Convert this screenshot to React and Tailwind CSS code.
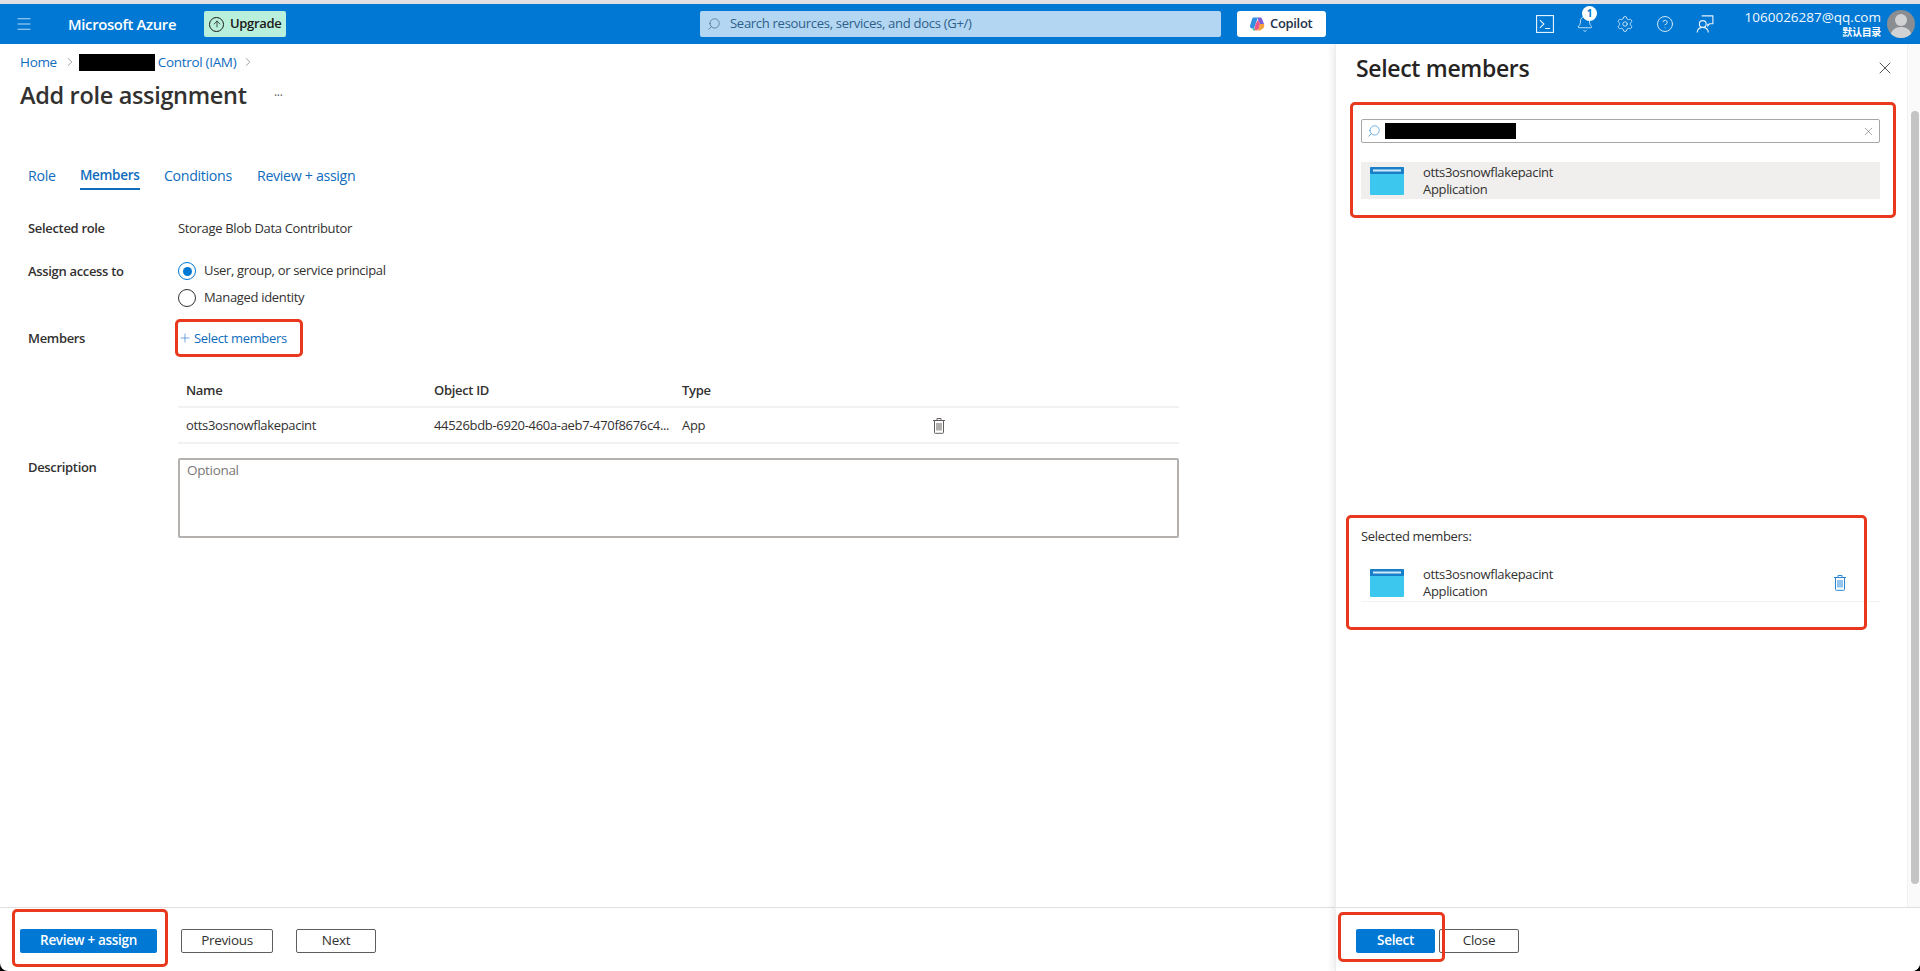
import React from "react";
import { Bell, Settings, CircleHelp, X, Plus, ChevronRight, ArrowUp, Search, Menu } from "lucide-react";

const Trash = ({ color = "#605e5c" }) => (
  <svg width="14" height="17" viewBox="0 0 14 17" fill="none" stroke={color} strokeWidth="1">
    <path d="M1 3.5h12M5 3.5V1.5h4v2M2.5 3.5v12a.8.8 0 0 0 .8.8h7.4a.8.8 0 0 0 .8-.8v-12" />
    <path d="M5 6v7.5M7 6v7.5M9 6v7.5" />
  </svg>
);

const AppIcon = () => (
  <svg width="34" height="28" viewBox="0 0 34 28" className="shrink-0">
    <rect x="0" y="0" width="34" height="28" rx="1" fill="#3cc8ee" />
    <rect x="0" y="0" width="34" height="7" rx="1" fill="#1a7fc9" />
    <rect x="3" y="2.5" width="28" height="2" fill="#cfeafa" />
  </svg>
);

const Annot = ({ className }) => (
  <div className={"absolute border-[3px] border-[#e8391f] rounded-[5px] pointer-events-none " + className} />
);

const Label = ({ children }) => (
  <div className="w-[150px] shrink-0 font-semibold text-[#323130]">{children}</div>
);

export default function App() {
  return (
    <div className="h-[971px] w-[1920px] bg-black overflow-hidden">
      <div
        className="relative h-full w-full overflow-hidden rounded-b-[8px] flex flex-col bg-white text-[13px] tracking-[-0.025em] text-[#323130]"
        style={{ fontFamily: '"Open Sans","Noto Sans CJK SC",sans-serif' }}
      >
        <div className="h-1 bg-[#e1dfe1] shrink-0" />
        <header className="h-10 shrink-0 bg-[#0078d4] flex items-center text-white">
          <Menu className="ml-[15px] w-[18px] h-[18px]" strokeWidth={1.2} color="#cfe6f8" />
          <div className="ml-[35px] w-[136px] text-[14.8px] font-semibold">Microsoft Azure</div>
          <div className="h-[26px] w-[82px] rounded-[2px] bg-[#b9f0dc] text-[#1b1a19] flex items-center gap-[6px] pl-[5px] text-[13px] font-semibold">
            <span className="w-[15px] h-[15px] rounded-full border border-[#1b1a19] flex items-center justify-center">
              <ArrowUp className="w-[10px] h-[10px]" strokeWidth={1.8} />
            </span>
            Upgrade
          </div>
          <div className="ml-[414px] h-[26px] w-[521px] rounded-[2px] bg-[#b3d6f2] flex items-center text-[#2d5f8a] text-[13.1px]">
            <Search className="ml-[7px] w-[14px] h-[14px] -scale-x-100" strokeWidth={1.2} color="#44688a" />
            <span className="ml-[9px]">Search resources, services, and docs (G+/)</span>
          </div>
          <div className="ml-4 h-[26px] w-[89px] rounded-[3px] bg-white text-[#24324a] flex items-center gap-[5px] pl-[12px] text-[13px] font-semibold">
            <svg width="16" height="16" viewBox="0 0 16 16">
              <path d="M5 1.5h4L6.5 8 5 12.5H3.2C1.5 12.5.6 11 1.1 9.5L3 3.2C3.3 2.2 4 1.5 5 1.5z" fill="#2f8fe0" />
              <path d="M9 1.5h2.2c1 0 1.7.7 2 1.700L15 8 11 8 9 4z" fill="#7a5fd6" />
              <path d="M6.500 8 9 4l2 4-1.500 5.500-4.500 1z" fill="#e8578a" />
              <path d="M11 8h4c.8 1.800 0 4.500-2 5-1 1-2 1.500-3 1.500H6l3.500-1z" fill="#f5a13a" />
              <path d="M3.200 12.500H5.500L6 14.500c-1.300.2-2.300-.7-2.800-2z" fill="#3cc07a" />
            </svg>
            Copilot
          </div>
          <div className="ml-[210px] flex items-center gap-[22px]">
            <svg width="18" height="18" viewBox="0 0 16 16" fill="none" stroke="#e6f2fb" strokeWidth="1">
              <rect x="0.500" y="0.500" width="15" height="15" />
              <path d="M3.500 4.500 7 8l-3.500 3.500M8 12h4.500" />
            </svg>
            <div className="relative">
              <Bell className="w-[18px] h-[18px]" strokeWidth={1.1} color="#e6f2fb" />
              <span className="absolute -top-[9px] left-[6px] w-[15px] h-[15px] rounded-full bg-white text-[#0078d4] text-[10px] font-bold flex items-center justify-center">1</span>
            </div>
            <Settings className="w-[18px] h-[18px]" strokeWidth={1.1} color="#e6f2fb" />
            <CircleHelp className="w-[18px] h-[18px]" strokeWidth={1.2} color="#e6f2fb" />
            <svg width="18" height="18" viewBox="0 0 16 16" fill="none" stroke="#e6f2fb" strokeWidth="1">
              <circle cx="6" cy="8" r="3" />
              <path d="M1 15.500c.3-2.800 2.200-4.500 5-4.500s4.700 1.700 5 4.500M5 .800h10v7h-3l-1.500 1.700V7.800" />
            </svg>
          </div>
          <div className="ml-auto flex flex-col items-end leading-none mr-[6px] -mt-[1px]">
            <span className="text-[13.5px] text-[#f3f9fd] tracking-normal leading-[17px]">1060026287@qq.com</span>
            <span className="text-[10px] font-bold leading-[13px]">默认目录</span>
          </div>
          <div className="w-[28px] h-[28px] mr-[5px] rounded-full bg-[#8a8d91] overflow-hidden relative shrink-0 flex flex-col items-center">
            <span className="mt-[4px] w-[12px] h-[12px] rounded-full bg-[#d0d2d4]" />
            <span className="mt-[1px] w-[22px] h-[12px] rounded-t-[10px] bg-[#d0d2d4]" />
          </div>
        </header>

        <div className="flex-1 flex min-h-0">
          <main className="flex-1 flex flex-col min-w-0">
            <div className="flex-1 pl-5 min-h-0">
              <nav className="h-[16px] mt-[10px] flex items-center text-[#0f6cbd]">
                <span className="text-[13.5px]">Home</span>
                <ChevronRight className="ml-[6px] w-[14px] h-[14px]" strokeWidth={1} color="#605e5c" />
                <span className="ml-[2px] w-[76px] h-[17px] bg-black" />
                <span className="ml-[3px] text-[13.5px]">Control (IAM)</span>
                <ChevronRight className="ml-[5px] w-[14px] h-[14px]" strokeWidth={1} color="#605e5c" />
              </nav>
              <div className="mt-[8px] h-[36px] flex items-center">
                <h1 className="text-[23.5px] font-semibold text-[#323130] w-[254px]">Add role assignment</h1>
                <span className="text-[12px] text-[#605e5c]">···</span>
              </div>
              <div className="mt-[48px] pl-2 flex gap-[24px] text-[#0f6cbd] text-[14.2px] h-[28px]">
                <span className="pt-[3px] w-[28px]">Role</span>
                <span className="pt-[3px] w-[60px] h-[28px] font-semibold border-b-2 border-[#0f6cbd] text-[13.5px]">Members</span>
                <span className="pt-[3px] w-[69px]">Conditions</span>
                <span className="pt-[3px]">Review + assign</span>
              </div>

              <div className="mt-[29px] pl-2 flex h-[20px] items-center">
                <Label>Selected role</Label>
                <span>Storage Blob Data Contributor</span>
              </div>
              <div className="mt-[23px] pl-2 flex">
                <Label>Assign access to</Label>
                <div className="flex flex-col gap-[9px]">
                  <div className="flex items-center gap-[8px] h-[18px]">
                    <span className="w-[18px] h-[18px] rounded-full border border-[#0078d4] flex items-center justify-center">
                      <span className="w-[9px] h-[9px] rounded-full bg-[#0078d4]" />
                    </span>
                    User, group, or service principal
                  </div>
                  <div className="flex items-center gap-[8px] h-[18px]">
                    <span className="w-[18px] h-[18px] rounded-full border border-[#323130]" />
                    Managed identity
                  </div>
                </div>
              </div>
              <div className="mt-[23px] pl-2 flex h-[18px] items-center">
                <Label>Members</Label>
                <div className="relative flex items-center text-[#0f6cbd] text-[13px]">
                  <Plus className="w-[14px] h-[14px] -mt-[2px]" strokeWidth={1} />
                  <span className="ml-[2px]">Select members</span>
                  <Annot className="-left-[3px] -right-[16px] -top-[10px] -bottom-[8px]" />
                </div>
              </div>
              <div className="ml-[158px] w-[1001px] mt-[31px]">
                <div className="flex h-[29px] items-center font-semibold border-b-2 border-[#f3f2f1] pb-1 pl-[8px]">
                  <span className="w-[248px]">Name</span>
                  <span className="w-[248px]">Object ID</span>
                  <span>Type</span>
                </div>
                <div className="flex h-[36px] items-center border-b-2 border-[#f3f2f1] pl-[8px] pt-[1px]">
                  <span className="w-[248px]">otts3osnowflakepacint</span>
                  <span className="w-[248px]">44526bdb-6920-460a-aeb7-470f8676c4...</span>
                  <span className="w-[250px]">App</span>
                  <Trash />
                </div>
              </div>
              <div className="mt-[14px] pl-2 flex">
                <div className="w-[150px] shrink-0 font-semibold leading-[18px]">Description</div>
                <div className="w-[1001px] h-[80px] border-2 border-[#b3b0ad] rounded-[2px] pl-[7px] text-[#7a7876] text-[13.5px]">Optional</div>
              </div>
            </div>
            <footer className="h-[64px] shrink-0 border-t border-[#e1dfdd] flex items-center pl-5 pb-[8px] pt-[10px] text-[13.5px]">
              <div className="relative">
                <button className="block w-[137px] h-[24px] rounded-[2px] bg-[#0078d4] text-white font-semibold">Review + assign</button>
                <Annot className="-left-[8px] -right-[11px] -top-[20px] -bottom-[14px]" />
              </div>
              <button className="ml-[24px] w-[92px] h-[24px] rounded-[2px] border border-[#605e5c] font-medium">Previous</button>
              <button className="ml-[23px] w-[80px] h-[24px] rounded-[2px] border border-[#605e5c] font-medium">Next</button>
            </footer>
          </main>

          <aside className="w-[585px] shrink-0 flex flex-col border-l border-[#ececec] shadow-[-3px_0_6px_rgba(0,0,0,0.07)] z-10 bg-white">
            <div className="flex-1 flex min-h-0">
              <div className="flex-1 min-w-0 pl-5 pr-[26px]">
                <div className="flex h-[28px] mt-[10px] items-center justify-between">
                  <h2 className="text-[23px] font-semibold text-[#252423]">Select members</h2>
                  <X className="w-[20px] h-[20px] mr-[-14px]" strokeWidth={1} color="#323130" />
                </div>
                <div className="relative mt-[37px] w-[519px] ml-[5px]">
                  <Annot className="-left-[11px] -right-[16px] -top-[17px] -bottom-[19px]" />
                  <div className="h-[24px] border-[1.5px] border-[#a8a6a4] rounded-[2px] flex items-center">
                    <Search className="ml-[5px] w-[14px] h-[14px] -scale-x-100" strokeWidth={1.3} color="#4a9bdb" />
                    <span className="ml-[4px] w-[131px] h-[16px] bg-black" />
                    <X className="ml-auto mr-[4px] w-[13px] h-[13px]" strokeWidth={1} color="#605e5c" />
                  </div>
                  <div className="mt-[19px] h-[37px] bg-[#f0efee] flex items-center pl-[9px] text-[13px] leading-[17px]">
                    <AppIcon />
                    <div className="ml-[19px]">
                      <div>otts3osnowflakepacint</div>
                      <div>Application</div>
                    </div>
                  </div>
                </div>
                <div className="relative mt-[329px] w-[519px] ml-[5px]">
                  <Annot className="-left-[15px] right-[13px] -top-[13px] -bottom-[28px]" />
                  <div className="h-[18px] text-[13px] flex items-center">Selected members:</div>
                  <div className="mt-[20px] h-[36px] pb-[2px] border-b border-[#f3f2f1] flex items-center pl-[9px] leading-[17px]">
                    <AppIcon />
                    <div className="ml-[19px]">
                      <div>otts3osnowflakepacint</div>
                      <div>Application</div>
                    </div>
                    <span className="ml-auto mr-[33px]"><Trash color="#2b88d8" /></span>
                  </div>
                </div>
              </div>
              <div className="w-[13px] shrink-0 border-l border-[#f3f2f1] bg-[#fafafa] pt-[67px] pb-[23px] pl-[3px]">
                <div className="h-full w-[8px] rounded-full bg-[#c4c4c4]" />
              </div>
            </div>
            <footer className="h-[64px] shrink-0 border-t border-[#e1dfdd] flex items-center pl-5 pb-[8px] pt-[10px] text-[13.5px]">
              <div className="relative">
                <button className="block w-[79px] h-[24px] rounded-[2px] bg-[#0078d4] text-white font-semibold">Select</button>
                <Annot className="-left-[18px] -right-[10px] -top-[17px] -bottom-[9px]" />
              </div>
              <button className="ml-[4px] w-[80px] h-[24px] rounded-[2px] border border-[#605e5c] font-medium">Close</button>
            </footer>
          </aside>
        </div>
      </div>
    </div>
  );
}
